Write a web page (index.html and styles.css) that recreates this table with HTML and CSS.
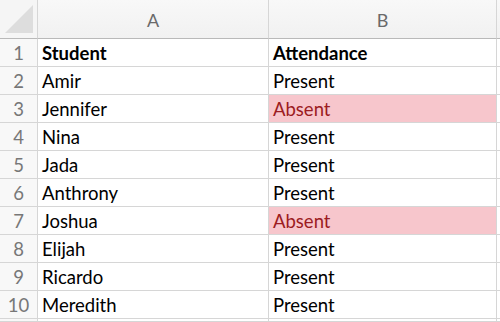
FILE: index.html
```html
<!DOCTYPE html>
<html>
<head>
<meta charset="utf-8">
<link rel="stylesheet" href="styles.css">
</head>
<body>
<div class="sheet">
  <div class="corner"><span class="tri"></span></div>
  <div class="colhead">A</div>
  <div class="colhead">B</div>
  <div class="colhead tail"></div>

  <div class="rowhead">1</div><div class="cell bold">Student</div><div class="cell bold">Attendance</div><div class="cell tail"></div>
  <div class="rowhead">2</div><div class="cell">Amir</div><div class="cell">Present</div><div class="cell tail"></div>
  <div class="rowhead">3</div><div class="cell">Jennifer</div><div class="cell absent">Absent</div><div class="cell tail"></div>
  <div class="rowhead">4</div><div class="cell">Nina</div><div class="cell">Present</div><div class="cell tail"></div>
  <div class="rowhead">5</div><div class="cell">Jada</div><div class="cell">Present</div><div class="cell tail"></div>
  <div class="rowhead">6</div><div class="cell">Anthrony</div><div class="cell">Present</div><div class="cell tail"></div>
  <div class="rowhead">7</div><div class="cell">Joshua</div><div class="cell absent">Absent</div><div class="cell tail"></div>
  <div class="rowhead">8</div><div class="cell">Elijah</div><div class="cell">Present</div><div class="cell tail"></div>
  <div class="rowhead">9</div><div class="cell">Ricardo</div><div class="cell">Present</div><div class="cell tail"></div>
  <div class="rowhead">10</div><div class="cell">Meredith</div><div class="cell">Present</div><div class="cell tail"></div>
  <div class="rowhead"></div><div class="cell"></div><div class="cell"></div><div class="cell tail"></div>
</div>
</body>
</html>
```

FILE: styles.css
```css
html, body {
  margin: 0;
  padding: 0;
  background: #ffffff;
  overflow: hidden;
}

.sheet {
  display: grid;
  grid-template-columns: 38px 231px 228px 1fr;
  grid-template-rows: 39px repeat(10, 28px) 3px;
  width: 500px;
  font-family: Lato, "Open Sans", sans-serif;
  font-size: 18.5px;
  color: #000;
}

.sheet > div {
  box-sizing: border-box;
  border-right: 1px solid #d6d6d6;
  border-bottom: 1px solid #d6d6d6;
}

.corner {
  background: #f5f5f5;
  border-bottom-color: #b9b9b9 !important;
  position: relative;
}

.tri {
  position: absolute;
  left: 5px;
  top: 5px;
  width: 28px;
  height: 28px;
  background: #dddddd;
  clip-path: polygon(100% 0, 100% 100%, 0 100%);
}

.colhead {
  background: linear-gradient(#f8f8f8, #f1f1f1);
  border-bottom-color: #b9b9b9 !important;
  color: #6a6a6a;
  text-align: center;
  line-height: 40px;
  font-size: 18px;
}

.colhead.tail {
  border-right: none !important;
}

.rowhead {
  background: #f8f8f8;
  color: #777777;
  text-align: center;
  line-height: 28px;
}

.cell {
  padding-left: 4px;
  line-height: 28px;
  white-space: nowrap;
  overflow: hidden;
}

.cell.tail {
  border-right: none !important;
}

.bold {
  font-weight: bold;
}

.absent {
  background: #f7c6cc;
  color: #9c1c22;
}
```
